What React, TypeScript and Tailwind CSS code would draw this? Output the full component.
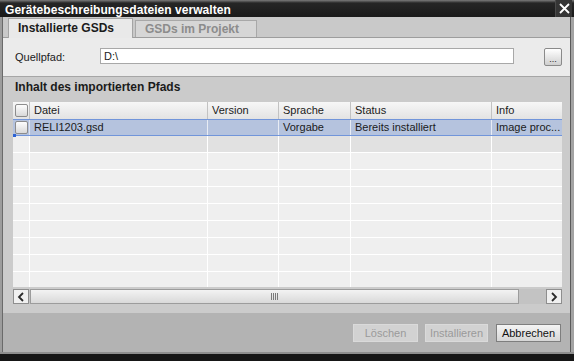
import React from 'react';

const cols = ['17px', '178px', '71px', '72px', '141px', '70px'];
const gridCols = 'grid grid-cols-[17px_178px_71px_72px_141px_70px]';

const CheckBox: React.FC = () => (
  <div className="w-[13px] h-[13px] rounded-[2px] border border-[#8c8c8c] bg-gradient-to-b from-[#fdfdfd] to-[#d9d9d9]" />
);

const Chevron: React.FC<{ dir: 'left' | 'right' }> = ({ dir }) => (
  <svg width="8" height="10" viewBox="0 0 8 10">
    <polyline
      points={dir === 'left' ? '6,1 2,5 6,9' : '2,1 6,5 2,9'}
      fill="none"
      stroke="#2a2a2a"
      strokeWidth="1.8"
    />
  </svg>
);

const App: React.FC = () => {
  const headers = ['Datei', 'Version', 'Sprache', 'Status', 'Info'];
  const selected = ['RELI1203.gsd', '', 'Vorgabe', 'Bereits installiert', 'Image proc...'];

  return (
    <div className="w-[574px] h-[361px] flex flex-col overflow-hidden bg-[#cbcbcb] text-[11px] text-[#1b1b1b] font-['Liberation_Sans',Arial,sans-serif]">
      {/* title bar */}
      <div className="h-[17px] flex justify-between bg-[linear-gradient(#7c7c7c,#262626_3px,#1a1a1a)]">
        <div className="pl-[5px] pt-[3px] leading-[14px] text-[12px] font-bold text-white tracking-[0.05px]">
          Gerätebeschreibungsdateien verwalten
        </div>
        <div className="w-[17px] h-[17px] mr-[2px] flex items-center justify-center bg-[#353535] border-l border-[#4a4a4a]">
          <svg width="11" height="11" viewBox="0 0 11 11">
            <path d="M1 1 L10 10 M10 1 L1 10" stroke="#ffffff" strokeWidth="1.8" />
          </svg>
        </div>
      </div>

      <div className="flex-1 flex">
        {/* left frame */}
        <div className="w-[2px] bg-[#9c9c9c]" />
        <div className="w-[1px] bg-[#6a6a6a]" />

        <div className="flex-1 flex flex-col">
          {/* tabs */}
          <div className="h-[21px] flex items-end pl-[5px] bg-[#c9c9c9] border-b border-[#9d9d9d]">
            <div className="w-[125px] h-[20px] -mb-px pl-[9px] leading-[19px] text-[12px] font-bold bg-[#e9e9e9] border border-b-0 border-[#a4a4a4]">
              Installierte GSDs
            </div>
            <div className="w-[122px] h-[17px] ml-[2px] pl-[9px] leading-[16px] text-[12px] font-bold text-[#8c8c8c] bg-[#d6d6d6] border border-b-0 border-[#a8a8a8]">
              GSDs im Projekt
            </div>
          </div>

          {/* source path */}
          <div className="h-[39px] flex items-start pt-[10px] bg-[#ebebeb] border-b border-[#a6a6a6]">
            <div className="w-[97px] pl-[12px] pt-[2px] leading-[14px]">Quellpfad:</div>
            <div className="w-[414px] h-[16px] pl-[3px] leading-[15px] bg-white border border-[#a8a8a8]">D:\</div>
            <div className="ml-[30px] w-[18px] h-[18px] flex items-end justify-center pb-[2px] rounded-[2px] border border-[#8a8a8a] bg-gradient-to-b from-[#ffffff] to-[#cfcfcf] text-[9px] leading-[8px]">
              ...
            </div>
          </div>

          {/* content */}
          <div className="flex-1 flex flex-col pt-[3px] bg-[#cbcbcb]">
            <div className="pl-[12px] h-[15px] leading-[15px] text-[12px] font-bold">Inhalt des importierten Pfads</div>

            <div className="ml-[10px] mt-[7px] w-[549px] h-[185px] overflow-hidden flex flex-col bg-[#efefef]">
              <div className={`${gridCols} h-[17px] bg-gradient-to-b from-[#f7f7f7] to-[#e3e3e3]`}>
                <div className="flex items-center justify-center border-r border-[#c2c2c2]">
                  <CheckBox />
                </div>
                {headers.map((h, i) => (
                  <div
                    key={h}
                    className={`pl-[4px] leading-[17px] ${i < headers.length - 1 ? 'border-r border-[#c2c2c2]' : ''}`}
                  >
                    {h}
                  </div>
                ))}
              </div>

              <div className="relative">
                <div className={`${gridCols} h-[17px] bg-[#b5c3de] border-t border-b border-[#7195da]`}>
                  <div className="flex items-center justify-center border-r border-[#dde3ef]">
                    <CheckBox />
                  </div>
                  {selected.map((c, i) => (
                    <div
                      key={i}
                      className={`pl-[4px] leading-[15px] whitespace-nowrap overflow-hidden ${i < selected.length - 1 ? 'border-r border-[#e8ecf4]' : ''}`}
                    >
                      {c}
                    </div>
                  ))}
                </div>
                <div className="absolute left-0 bottom-[-1px] w-[3px] h-[3px] bg-[#2c62d4]" />
              </div>

              {Array.from({ length: 9 }).map((_, r) => (
                <div key={r} className={`${gridCols} h-[17px] shrink-0 border-b border-white`}>
                  {cols.map((_, i) => (
                    <div
                      key={i}
                      className={`${i < cols.length - 1 ? 'border-r border-white' : ''} ${
                        r === 0 && i > 0 ? 'bg-[#e1e1e1]' : 'bg-[#efefef]'
                      }`}
                    />
                  ))}
                </div>
              ))}
            </div>

            {/* horizontal scrollbar */}
            <div className="ml-[10px] mt-[2px] w-[549px] h-[15px] flex bg-[#c3c3c3]">
              <div className="w-[16px] h-[15px] flex items-center justify-center border border-[#8e8e8e] bg-[#f0f0f0]">
                <Chevron dir="left" />
              </div>
              <div className="ml-[1px] w-[489px] h-[15px] flex items-center justify-end pr-[240px] border border-[#9c9c9c] bg-gradient-to-b from-[#f3f3f3] to-[#d9d9d9]">
                <div className="flex gap-[1px] h-[7px]">
                  <div className="w-[1px] bg-[#7a7a7a]" />
                  <div className="w-[1px] bg-[#7a7a7a]" />
                  <div className="w-[1px] bg-[#7a7a7a]" />
                  <div className="w-[1px] bg-[#7a7a7a]" />
                </div>
              </div>
              <div className="flex-1" />
              <div className="w-[16px] h-[15px] flex items-center justify-center border border-[#8e8e8e] bg-[#f0f0f0]">
                <Chevron dir="right" />
              </div>
            </div>
            <div className="flex-1" />
          </div>

          {/* footer */}
          <div className="h-[39px] flex items-start justify-end gap-[7px] pt-[11px] pr-[9px] bg-[#b3b3b3]">
            <div className="w-[65px] h-[18px] flex items-center justify-center border border-[#dadada] bg-[#d2d2d2] text-[#9a9a9a]">
              Löschen
            </div>
            <div className="w-[63px] h-[18px] flex items-center justify-center border border-[#dadada] bg-[#d2d2d2] text-[#9a9a9a]">
              Installieren
            </div>
            <div className="ml-[1px] w-[65px] h-[18px] flex items-center justify-center border border-[#7e7e7e] bg-gradient-to-b from-[#f4f4f4] to-[#d6d6d6] text-[#111]">
              Abbrechen
            </div>
          </div>
        </div>

        {/* right frame */}
        <div className="w-[1px] bg-[#5a5a5a]" />
        <div className="w-[3px] bg-[#a3a3a3]" />
      </div>

      {/* bottom frame */}
      <div className="h-[2px] bg-[#8e8e8e]" />
      <div className="h-[7px] bg-[#161616]" />
    </div>
  );
};

export default App;
